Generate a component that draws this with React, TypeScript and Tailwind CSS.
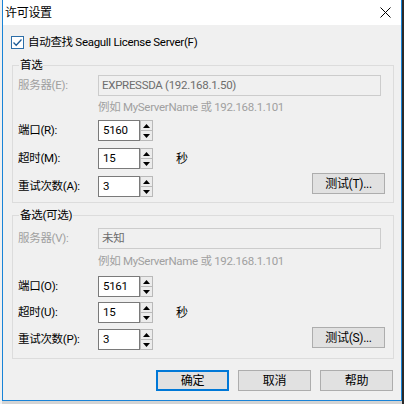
import React from "react";

const FONT = "font-['Roboto','Noto_Sans_CJK_SC',sans-serif] tracking-[-0.3px]";

function Spin({ value }: { value: string }) {
  return (
    <div className="flex h-[21px] w-[55px]">
      <div className="flex h-[21px] w-[42px] items-center border border-[#7a7a7a] bg-white pl-[4px] text-[11.5px] text-black">
        {value}
      </div>
      <div className="flex h-[21px] w-[13px] flex-col">
        <div className="flex h-[11px] items-center justify-center border border-[#b9b9b9] bg-[#ececec]">
          <svg width="7" height="4" viewBox="0 0 7 4">
            <path d="M3.5 0 L7 4 L0 4 Z" fill="#000" />
          </svg>
        </div>
        <div className="flex h-[10px] items-center justify-center border border-t-0 border-[#b9b9b9] bg-[#ececec]">
          <svg width="7" height="4" viewBox="0 0 7 4">
            <path d="M0 0 L7 0 L3.5 4 Z" fill="#000" />
          </svg>
        </div>
      </div>
    </div>
  );
}

function Btn({ label, def }: { label: React.ReactNode; def?: boolean }) {
  return (
    <div
      className={
        def
          ? "flex h-[21px] w-[73px] items-center justify-center border-2 border-[#0078d7] bg-[#e1e1e1] text-[12px] text-black"
          : "flex h-[21px] w-[73px] items-center justify-center border border-[#adadad] bg-[#e1e1e1] text-[12px] text-black"
      }
    >
      {label}
    </div>
  );
}

function Label({ text, grey }: { text: string; grey?: boolean }) {
  return (
    <div className={grey ? "w-[80px] text-[11.5px] text-[#a0a0a0]" : "w-[80px] text-[11.5px] text-black"}>{text}</div>
  );
}

function Group({
  title,
  server,
  serverLabel,
  portLabel,
  portValue,
  timeoutLabel,
  retryLabel,
  test,
  top,
  hintMt,
  firstMt,
  gap2,
  gap3,
  testMt,
  height,
}: {
  title: string;
  server: string;
  serverLabel: string;
  portLabel: string;
  portValue: string;
  timeoutLabel: string;
  retryLabel: string;
  test: string;
  top: string;
  hintMt: string;
  firstMt: string;
  gap2: string;
  gap3: string;
  testMt: string;
  height: string;
}) {
  return (
    <div className={`relative ml-[9px] w-[382px] border border-[#dcdcdc] ${height}`}>
      <div className="absolute left-[6px] top-[-9px] bg-[#f0f0f0] px-[1px] text-[11.5px] leading-[16px] text-black">
        {title}
      </div>
      <div className={`flex flex-col pl-[5px] ${top}`}>
        <div className="flex h-[21px] items-center">
          <Label text={serverLabel} grey />
          <div className="flex h-[21px] w-[283px] items-center border border-[#cccccc] bg-[#f0f0f0] pl-[3px] text-[11.5px] text-[#6d6d6d]">
            {server}
          </div>
        </div>
        <div className={`ml-[80px] h-[16px] text-[11.5px] leading-[16px] text-[#a0a0a0] ${hintMt}`}>
          例如 MyServerName 或 192.168.1.101
        </div>
        <div className={`flex h-[21px] items-center ${firstMt}`}>
          <Label text={portLabel} />
          <Spin value={portValue} />
        </div>
        <div className={`flex h-[21px] items-center ${gap2}`}>
          <Label text={timeoutLabel} />
          <Spin value="15" />
          <div className="ml-[23px] text-[12px] text-black">秒</div>
        </div>
        <div className={`flex h-[21px] items-start ${gap3}`}>
          <div className="flex h-[21px] items-center">
            <Label text={retryLabel} />
            <Spin value="3" />
          </div>
          <div className={`ml-auto mr-[8px] ${testMt}`}>
            <Btn label={`测试(${test})...`} />
          </div>
        </div>
      </div>
    </div>
  );
}

export default function App() {
  return (
    <div className={`flex h-[404px] w-[404px] bg-[#d4d4d4] ${FONT}`}>
      <div className="h-[404px] w-[2px] bg-[#f0f0f0]" />
      <div className="flex h-[401px] w-[400px] flex-col border-x border-b border-[#1883d7] bg-[#f0f0f0] text-[11.5px]">
        <div className="flex h-[25px] items-center justify-between bg-white pl-[2px] pr-[10px]">
          <div className="text-[12px] text-black">许可设置</div>
          <svg width="11" height="11" viewBox="0 0 11 11">
            <path d="M0.5 0.5 L10.5 10.5 M10.5 0.5 L0.5 10.5" stroke="#000" strokeWidth="1" />
          </svg>
        </div>
        <div className="mt-[11px] flex h-[13px] items-center pl-[8px]">
          <div className="flex h-[13px] w-[13px] items-center justify-center border border-[#2c6ea8] bg-white">
            <svg width="11" height="11" viewBox="0 0 11 11">
              <path d="M1.5 5.5 L4.2 8.3 L9.5 2.5" stroke="#1e5c96" strokeWidth="1.3" fill="none" />
            </svg>
          </div>
          <div className="ml-[4px] text-[11.5px] text-black">自动查找 Seagull License Server(F)</div>
        </div>
        <div className="mt-[16px]">
          <Group
            title="首选"
            server="EXPRESSDA (192.168.1.50)"
            serverLabel="服务器(E):"
            portLabel="端口(R):"
            portValue="5160"
            timeoutLabel="超时(M):"
            retryLabel="重试次数(A):"
            test="T"
            top="pt-[9px]"
            hintMt="mt-[3px]"
            firstMt="mt-[5px]"
            gap2="mt-[7px]"
            gap3="mt-[7px]"
            testMt="mt-[-3px]"
            height="h-[138px]"
          />
        </div>
        <div className="mt-[12px]">
          <Group
            title="备选(可选)"
            server="未知"
            serverLabel="服务器(V):"
            portLabel="端口(O):"
            portValue="5161"
            timeoutLabel="超时(U):"
            retryLabel="重试次数(P):"
            test="S"
            top="pt-[12px]"
            hintMt="mt-[4px]"
            firstMt="mt-[7px]"
            gap2="mt-[5px]"
            gap3="mt-[6px]"
            testMt="mt-[-2px]"
            height="h-[144px]"
          />
        </div>
        <div className="mt-[11px] flex justify-end gap-[9px] pr-[8px]">
          <Btn label="确定" def />
          <Btn label="取消" />
          <Btn label="帮助" />
        </div>
      </div>
      <div className="h-[404px] w-[2px] bg-[#2a2a2a]" />
    </div>
  );
}
